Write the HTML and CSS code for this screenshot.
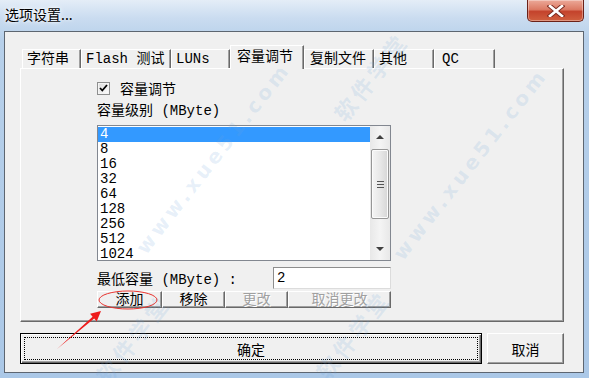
FILE: index.html
```html
<!DOCTYPE html>
<html lang="zh-CN">
  <head>
    <meta charset="UTF-8" />
    <title>选项设置...</title>
    <link rel="stylesheet" href="styles.css">
  </head>
  <body>
    <div class="window">
      <div class="titlebar">
        <span class="title">选项设置...</span>
        <div class="close">
          <svg width="18" height="12" viewBox="0 0 18 12">
            <path d="M3 1 L15 11 M15 1 L3 11" stroke="#7a2a1f" stroke-width="4.5" stroke-linecap="square"/>
            <path d="M3 1 L15 11 M15 1 L3 11" stroke="#fff" stroke-width="2.6" stroke-linecap="square"/>
          </svg>
        </div>
      </div>

      <div class="client">
        <div class="tabs">
          <div class="tab t-str">字符串</div>
          <div class="tab t-flash">Flash 测试</div>
          <div class="tab t-luns">LUNs</div>
          <div class="tab t-cap active">容量调节</div>
          <div class="tab t-copy">复制文件</div>
          <div class="tab t-other">其他</div>
          <div class="tab t-qc">QC</div>
        </div>

        <div class="panel">
          <div class="form">
            <div class="check">
              <span class="box">
                <svg width="9" height="8" viewBox="0 0 9 8"><path d="M1 4 L3.3 6.5 L8 1" fill="none" stroke="#000" stroke-width="1.8"/></svg>
              </span>
              <span>容量调节</span>
            </div>
            <div class="caption">容量级别 (MByte)</div>

            <div class="listbox">
              <ul class="items">
                <li class="sel">4</li>
                <li>8</li>
                <li>16</li>
                <li>32</li>
                <li>64</li>
                <li>128</li>
                <li>256</li>
                <li>512</li>
                <li>1024</li>
              </ul>
              <div class="scrollbar">
                <div class="sb-btn"><span class="arrow up"></span></div>
                <div class="sb-track">
                  <div class="thumb"><span class="grip"></span></div>
                </div>
                <div class="sb-btn"><span class="arrow down"></span></div>
              </div>
            </div>

            <div class="minrow">
              <span>最低容量 (MByte) :</span>
              <div class="edit">2</div>
            </div>

            <div class="btnrow">
              <button class="sbtn b-add">添加</button>
              <button class="sbtn b-del">移除</button>
              <button class="sbtn b-mod" disabled>更改</button>
              <button class="sbtn b-undo" disabled>取消更改</button>
            </div>
          </div>
        </div>

        <div class="actions">
          <button class="btn default"><span class="focus">确定</span></button>
          <button class="btn cancel">取消</button>
        </div>
      </div>

      <span class="wm wm-url1">www.xue51.com</span>
      <span class="wm wm-url2">www.xue51.com</span>
      <span class="wm wm-cn1">软件学堂</span>
      <span class="wm wm-cn2">软件学堂</span>
      <span class="wm wm-cn3">软件学堂</span>

      <svg class="annot" width="589" height="378" viewBox="0 0 589 378">
        <ellipse cx="128" cy="300" rx="29" ry="9" fill="none" stroke="#e8332f" stroke-width="1"/>
        <polygon points="57,349 92.6,316.7 90.1,313.8 101,311 96.7,321.4 94.2,318.5" fill="#ee1c1c"/>
      </svg>
    </div>
  </body>
</html>
```

FILE: styles.css
```css
*{
  margin: 0;
  padding: 0;
  box-sizing: border-box;
}
body {
  width: 589px;
  height: 378px;
  overflow: hidden;
  font-family: "Liberation Mono", "Noto Sans CJK SC", monospace;
  font-size: 14px;
  color: #000;
}
.window {
  position: relative;
  width: 589px;
  height: 378px;
  display: flex;
  flex-direction: column;
  background: linear-gradient(180deg, #e4edf7 0, #cadcf0 18px, #b7d0ea 40px, #abc8e7 100%);
  overflow: hidden;
}

/* title bar */
.titlebar {
  height: 32px;
  display: flex;
  justify-content: space-between;
  align-items: flex-start;
  padding-left: 5px;
}
.title {
  font-family: "Noto Sans CJK SC", sans-serif;
  font-size: 14px;
  line-height: 28px;
  text-shadow: 0 0 6px #fff, 0 0 3px #fff;
}
.close {
  width: 57px;
  height: 22px;
  margin-right: 5px;
  border: 1px solid #6b2118;
  border-top: none;
  border-radius: 0 0 5px 5px;
  background: linear-gradient(#eca999, #dc7a64 45%, #c4432c 55%, #d0603f);
  box-shadow: inset 0 0 0 1px rgba(255, 255, 255, 0.35);
  display: flex;
  justify-content: center;
  align-items: center;
}

/* client area */
.client {
  flex: 1;
  margin: 0 5px 5px 4px;
  background: #f0f0f0;
  border: 1px solid #5d6671;
  padding: 13px 19px 8px 15px;
  display: flex;
  flex-direction: column;
}

.tabs {
  display: flex;
  align-items: flex-end;
  height: 23px;
  padding-left: 2px;
}
.tab {
  height: 19px;
  line-height: 18px;
  padding-left: 4px;
  border-top: 1px solid #fff;
  border-left: 1px solid #fff;
  border-right: 1px solid #696969;
  box-shadow: inset -1px 0 #a0a0a0;
  white-space: nowrap;
}
.tab.active {
  height: 24px;
  line-height: 22px;
  margin-bottom: -1px;
  padding-left: 6px;
  background: #f0f0f0;
  position: relative;
  z-index: 1;
}
.t-str { width: 59px; }
.t-flash { width: 90px; }
.t-luns { width: 59px; }
.t-cap { width: 74px; }
.t-copy { width: 70px; padding-left: 5px; }
.t-other { width: 60px; }
.t-qc { width: 61px; padding-left: 7px; }

.panel {
  height: 254px;
  border: 1px solid;
  border-color: #fff #696969 #696969 #fff;
  box-shadow: inset -1px -1px #a0a0a0;
  padding: 11px 0 0 76px;
}
.form {
  width: 294px;
  display: flex;
  flex-direction: column;
}
.check {
  height: 16px;
  display: flex;
  align-items: center;
  gap: 10px;
}
.box {
  width: 13px;
  height: 13px;
  border: 1px solid #8e8f8f;
  background: linear-gradient(135deg, #dcdcdc, #fff);
  box-shadow: inset 0 0 0 1px #f4f4f4;
  display: flex;
  justify-content: center;
  align-items: center;
}
.caption {
  margin-top: 6px;
  height: 18px;
  line-height: 18px;
}

/* list box */
.listbox {
  margin-top: 5px;
  height: 136px;
  border: 1px solid #828790;
  background: #fff;
  display: flex;
}
.items {
  flex: 1;
  list-style: none;
  padding-top: 1px;
  overflow: hidden;
}
.items li {
  height: 15px;
  line-height: 15px;
  padding-left: 2px;
}
.items li.sel {
  background: #3399ff;
  color: #fff;
}
.scrollbar {
  width: 20px;
  display: flex;
  flex-direction: column;
  background: linear-gradient(90deg, #e8e8e8, #f4f4f4 50%, #e8e8e8);
}
.sb-btn {
  height: 22px;
  display: flex;
  justify-content: center;
  align-items: center;
}
.arrow {
  width: 0;
  height: 0;
  border-left: 4px solid transparent;
  border-right: 4px solid transparent;
}
.arrow.up { border-bottom: 4px solid #404040; }
.arrow.down { border-top: 4px solid #404040; }
.sb-track {
  flex: 1;
  padding: 1px 1px 0 1px;
}
.thumb {
  height: 70px;
  border: 1px solid #979797;
  border-radius: 2px;
  background: linear-gradient(90deg, #f5f5f5, #e8e8e8 50%, #d6d6d6);
  box-shadow: inset 0 0 0 1px #fbfbfb;
  display: flex;
  justify-content: center;
  align-items: center;
}
.grip {
  width: 7px;
  height: 7px;
  background: linear-gradient(#555 0 1px, transparent 1px 3px, #555 3px 4px, transparent 4px 6px, #555 6px 7px);
}

.minrow {
  margin-top: 5px;
  height: 23px;
  display: flex;
  justify-content: space-between;
  align-items: center;
}
.edit {
  width: 118px;
  height: 22px;
  border: 1px solid;
  border-color: #8d8d8d #dcdcdc #dcdcdc #8d8d8d;
  background: #fff;
  padding-left: 3px;
  line-height: 20px;
}

.btnrow {
  margin-top: 2px;
  height: 17px;
  display: flex;
}
.sbtn, .btn {
  font: inherit;
  color: #000;
  background: #f0f0f0;
  border: 1px solid;
  border-color: #fff #696969 #696969 #fff;
  box-shadow: inset -1px -1px #a0a0a0;
  display: flex;
  justify-content: center;
  align-items: center;
}
.sbtn {
  height: 17px;
  line-height: 14px;
}
.sbtn:disabled {
  color: #a0a0a0;
  text-shadow: 1px 1px #fff;
}
.b-add { width: 65px; }
.b-del { width: 63px; }
.b-mod { width: 63px; }
.b-undo { width: 103px; }

.actions {
  margin-top: 11px;
  height: 31px;
  display: flex;
  gap: 5px;
}
.btn {
  height: 31px;
}
.btn.default {
  flex: 1;
  border: 1px solid #000;
  box-shadow: inset 1px 1px #fff, inset -1px -1px #696969, inset -2px -2px #a0a0a0;
  padding: 3px;
  align-items: stretch;
}
.focus {
  flex: 1;
  border: 1px dotted #000;
  display: flex;
  justify-content: center;
  align-items: center;
}
.btn.cancel {
  width: 77px;
}

/* watermark and annotation overlays */
.wm {
  position: absolute;
  color: rgba(110, 165, 220, 0.17);
  font-family: "DejaVu Sans", "Noto Sans CJK SC", sans-serif;
  font-weight: bold;
  font-size: 20px;
  letter-spacing: 4px;
  white-space: nowrap;
  transform: rotate(-52deg);
  pointer-events: none;
}
.wm-url1 { left: 95px; top: 146px; }
.wm-url2 { left: 352px; top: 152px; }
.wm-cn1 { left: 318px; top: 60px; font-size: 22px; }
.wm-cn2 { left: 80px; top: 322px; font-size: 22px; }
.wm-cn3 { left: 300px; top: 318px; font-size: 22px; }
.annot {
  position: absolute;
  left: 0;
  top: 0;
  pointer-events: none;
}
```
